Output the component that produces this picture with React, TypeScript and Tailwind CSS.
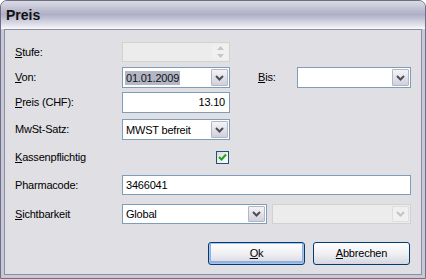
import React from "react";

const FONT = { fontFamily: '"Liberation Sans", Arial, sans-serif' };

function Key({ k, rest }: { k: string; rest: string }) {
  return (
    <span>
      <span className="underline underline-offset-[1px]">{k}</span>
      {rest}
    </span>
  );
}

function Arrow({ disabled }: { disabled?: boolean }) {
  return (
    <svg width="9" height="6" viewBox="0 0 9 6">
      <path d="M1 1 L4.5 4.5 L8 1" fill="none" stroke={disabled ? "#c4c4c8" : "#4d4d55"} strokeWidth="2" />
    </svg>
  );
}

function DropButton({ disabled }: { disabled?: boolean }) {
  return (
    <div
      className={`w-[17px] h-full flex items-center justify-center border rounded-[1px] ${
        disabled
          ? "border-[#dedede] bg-[#f0f0f0]"
          : "border-[#b4b6c4] bg-gradient-to-b from-[#f4f4f8] to-[#d0d0dc]"
      }`}
    >
      <Arrow disabled={disabled} />
    </div>
  );
}

function Combo({
  value,
  width,
  selected,
  disabled,
}: {
  value?: string;
  width: string;
  selected?: boolean;
  disabled?: boolean;
}) {
  return (
    <div
      className={`${width} h-full flex items-stretch border p-[1px] ${
        disabled ? "border-[#d2d2cc] bg-[#ececec]" : "border-[#7f9db9] bg-white"
      }`}
    >
      <div className="flex-1 flex items-center pl-[1px]">
        {value && (
          <span className={`px-[1px] leading-[14px] ${selected ? "bg-[#b4b6c6] text-[#111]" : "text-black"}`}>{value}</span>
        )}
      </div>
      <DropButton disabled={disabled} />
    </div>
  );
}

function Label({ children }: { children: React.ReactNode }) {
  return <div className="w-[107px] shrink-0 text-black">{children}</div>;
}

export default function App() {
  return (
    <div className="w-[426px] h-[279px] bg-white" style={FONT}>
      <div className="w-full h-full flex flex-col rounded-t-[7px] bg-[#c8c8d6] border border-[#6e6e86] overflow-hidden">
        {/* Title bar */}
        <div className="h-[28px] shrink-0 flex items-center pl-[5px] bg-gradient-to-b from-[#dcdce6] via-[#aeaec6] to-[#f2f2f6] border-b border-[#f8f8fb]">
          <span className="text-[14px] font-bold text-[#111] mt-[1px]">Preis</span>
        </div>
        {/* Body */}
        <div className="flex-1 mx-[3px] mb-[3px] border border-[#8c8ca4] bg-[#e0dfe3] text-[11px] tracking-[-0.2px] pl-[10px] flex flex-col">
          <div className="mt-[12px] h-[20px] flex items-center">
            <Label>
              <Key k="S" rest="tufe:" />
            </Label>
            <div className="w-[108px] h-full flex border border-[#d4d4cc] bg-[#ececec] p-[1px] justify-end">
              <div className="w-[16px] h-full flex flex-col">
                <div className="flex-1 bg-[#f0f0f0] flex items-center justify-center">
                  <svg width="7" height="4" viewBox="0 0 7 4"><path d="M0 4 L3.5 0 L7 4 Z" fill="#c6c6c6" /></svg>
                </div>
                <div className="flex-1 bg-[#f0f0f0] flex items-center justify-center">
                  <svg width="7" height="4" viewBox="0 0 7 4"><path d="M0 0 L3.5 4 L7 0 Z" fill="#c6c6c6" /></svg>
                </div>
              </div>
            </div>
          </div>

          <div className="mt-[5px] h-[21px] flex items-center">
            <Label>
              <Key k="V" rest="on:" />
            </Label>
            <Combo value="01.01.2009" width="w-[108px]" selected />
            <div className="w-[39px] ml-[28px] text-black">
              <Key k="B" rest="is:" />
            </div>
            <Combo width="w-[114px]" />
          </div>

          <div className="mt-[4px] h-[21px] flex items-center">
            <Label>
              <Key k="P" rest="reis (CHF):" />
            </Label>
            <div className="w-[108px] h-full border border-[#7f9db9] bg-white flex items-center justify-end pr-[4px] text-black">
              13.10
            </div>
          </div>

          <div className="mt-[6px] h-[21px] flex items-center">
            <Label>MwSt-Satz:</Label>
            <Combo value="MWST befreit" width="w-[108px]" />
          </div>

          <div className="mt-[11px] h-[13px] flex items-center">
            <Label>
              <Key k="K" rest="assenpflichtig" />
            </Label>
            <div className="ml-[94px] w-[13px] h-[13px] border border-[#1c5180] bg-gradient-to-br from-[#dcdcd7] to-white flex items-center justify-center">
              <svg width="9" height="9" viewBox="0 0 9 9">
                <path d="M1 4 L3.5 6.5 L8 1.5" fill="none" stroke="#21a121" strokeWidth="2" />
              </svg>
            </div>
          </div>

          <div className="mt-[11px] h-[20px] flex items-center">
            <Label>Pharmacode:</Label>
            <div className="w-[289px] h-full border border-[#7f9db9] bg-white flex items-center pl-[3px] text-black">
              3466041
            </div>
          </div>

          <div className="mt-[9px] h-[20px] flex items-center">
            <Label>
              <Key k="S" rest="ichtbarkeit" />
            </Label>
            <Combo value="Global" width="w-[145px]" />
            <div className="ml-[5px] h-full">
              <Combo width="w-[139px]" disabled />
            </div>
          </div>

          <div className="mt-[18px] h-[23px] flex justify-end pr-[11px] gap-[8px]">
            <button className="w-[97px] h-full rounded-[3px] border border-[#003c74] bg-gradient-to-b from-white via-[#f0f0f4] to-[#d6d6e0] shadow-[inset_0_0_0_1px_#a8c4ee,inset_0_-1px_0_2px_#8fb0e0] text-black">
              <Key k="O" rest="k" />
            </button>
            <button className="w-[97px] h-full rounded-[3px] border border-[#003c74] bg-gradient-to-b from-white via-[#f0f0f4] to-[#d6d6e0] text-black">
              <Key k="A" rest="bbrechen" />
            </button>
          </div>
        </div>
      </div>
    </div>
  );
}
